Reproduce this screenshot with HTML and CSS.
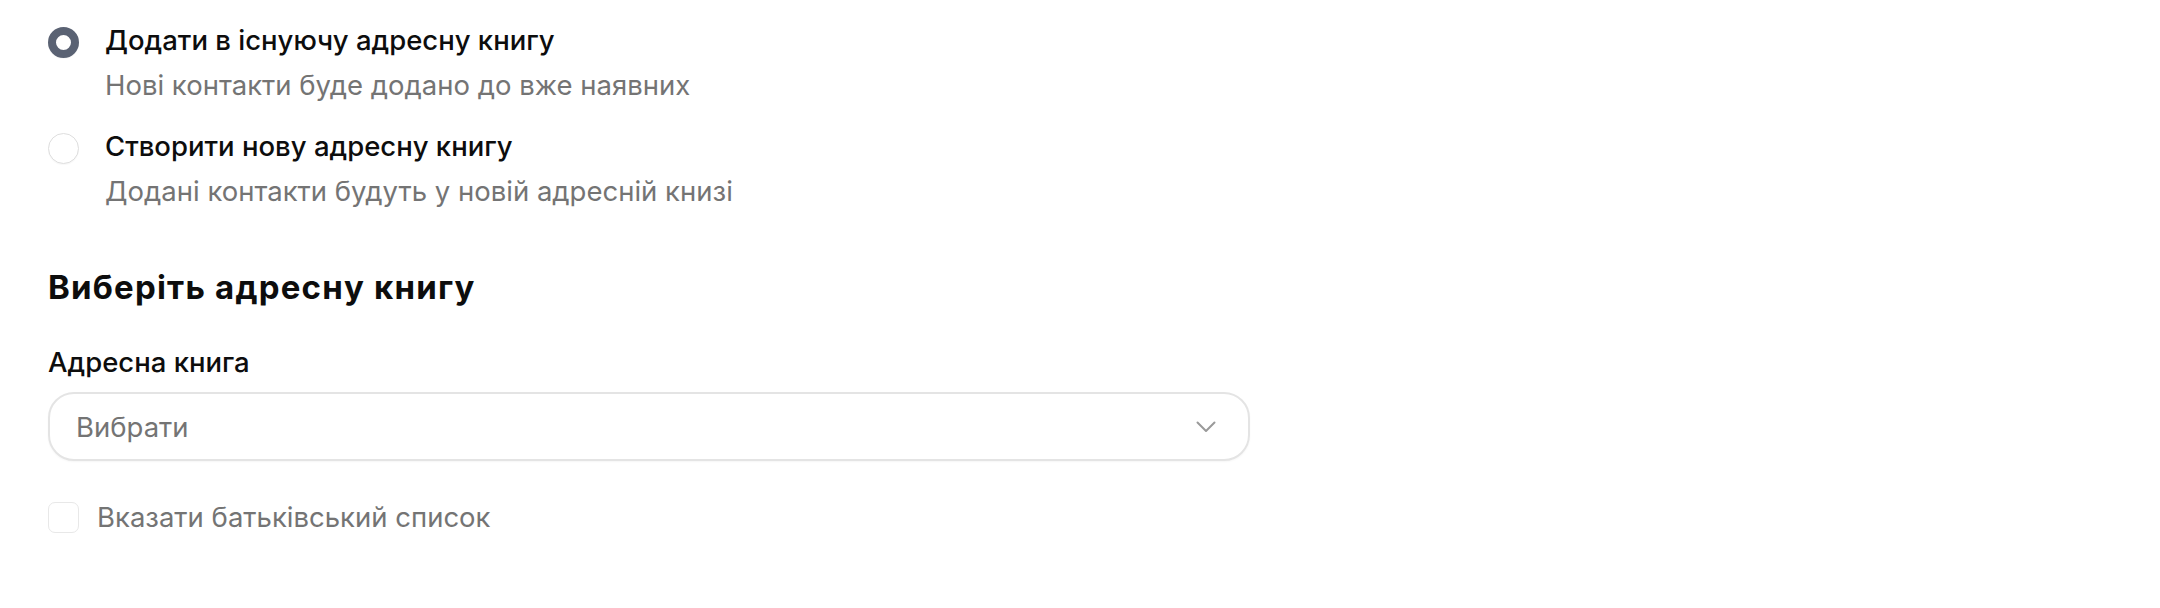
FILE: index.html
```html
<!DOCTYPE html>
<html lang="uk">
<head>
<meta charset="utf-8">
<link rel="stylesheet" href="styles.css">
</head>
<body>
<div class="page">
  <div class="options">
    <label class="option">
      <span class="radio radio-checked"></span>
      <span class="option-text">
        <span class="option-title">Додати в існуючу адресну книгу</span>
        <span class="option-desc">Нові контакти буде додано до вже наявних</span>
      </span>
    </label>
    <label class="option">
      <span class="radio"></span>
      <span class="option-text">
        <span class="option-title">Створити нову адресну книгу</span>
        <span class="option-desc">Додані контакти будуть у новій адресній книзі</span>
      </span>
    </label>
  </div>

  <h2 class="section-title">Виберіть адресну книгу</h2>

  <div class="field">
    <div class="field-label">Адресна книга</div>
    <div class="select">
      <span class="select-value">Вибрати</span>
      <svg class="chevron" width="20" height="12" viewBox="0 0 20 12"><path d="M1.5 1.5 L10 10 L18.5 1.5" fill="none" stroke="#9a9a9a" stroke-width="2" stroke-linecap="round" stroke-linejoin="round"/></svg>
    </div>
  </div>

  <label class="check">
    <span class="checkbox"></span>
    <span class="check-text">Вказати батьківський список</span>
  </label>
</div>
</body>
</html>
```
FILE: styles.css
```css
* { box-sizing: border-box; }
html, body { margin: 0; padding: 0; background: #ffffff; }
body {
  font-family: Inter, "Noto Sans", sans-serif;
  color: #0d0d0d;
}
.page {
  padding: 23px 0 0 48px;
  width: 1250px;
}
.options {
  display: flex;
  flex-direction: column;
  gap: 27.5px;
}
.option {
  display: flex;
  align-items: flex-start;
  gap: 26px;
}
.radio {
  flex: none;
  width: 31px;
  height: 31px;
  border-radius: 50%;
  border: 1.5px solid #dedede;
  background: #fff;
  margin-top: 4px;
  box-shadow: 0 1px 1px rgba(0,0,0,0.03);
}
.radio-checked {
  border: 8.5px solid #5a6273;
}
.option-text {
  display: flex;
  flex-direction: column;
  gap: 10.5px;
}
.option-title {
  font-size: 27.5px;
  font-weight: 500;
  line-height: 34px;
}
.option-desc {
  font-size: 27.5px;
  line-height: 34px;
  color: #747474;
}
.section-title {
  margin: 59.5px 0 0 0;
  font-size: 33px;
  font-weight: 700;
  line-height: 40px;
  letter-spacing: 1.2px;
}
.field {
  margin-top: 38px;
}
.field-label {
  font-size: 27.5px;
  font-weight: 500;
  line-height: 34px;
}
.select {
  margin-top: 13px;
  height: 69px;
  border: 2px solid #e4e4e4;
  border-radius: 26px;
  display: flex;
  align-items: center;
  justify-content: space-between;
  padding: 0 32px 0 26px;
  box-shadow: 0 1px 2px rgba(0,0,0,0.04);
}
.select-value {
  font-size: 27.5px;
  line-height: 34px;
  color: #747474;
}
.check {
  margin-top: 39px;
  display: flex;
  align-items: center;
  gap: 18px;
}
.checkbox {
  flex: none;
  width: 31px;
  height: 31px;
  border: 1.5px solid #e8e8e8;
  border-radius: 7px;
}
.check-text {
  font-size: 27.5px;
  line-height: 34px;
  color: #747474;
}
```
